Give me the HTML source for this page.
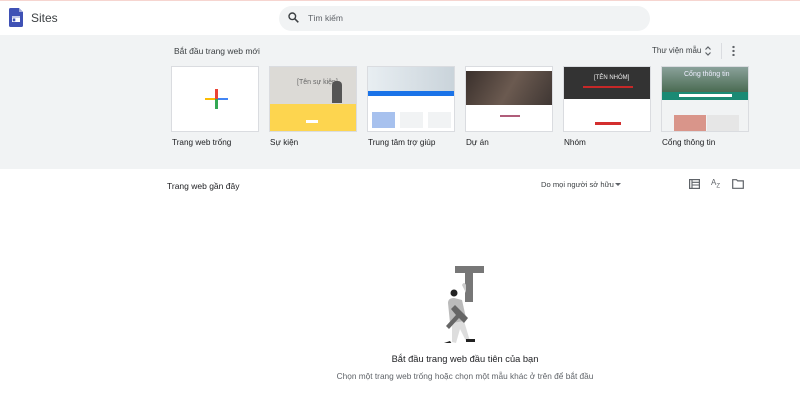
<!DOCTYPE html>
<html><head><meta charset="utf-8"><style>
*{margin:0;padding:0;box-sizing:border-box}
body{width:800px;height:419px;background:#fff;font-family:"Liberation Sans",Arial,sans-serif;position:relative;overflow:hidden;color:#202124}
.a{position:absolute}
.card{position:absolute;top:66px;width:88px;height:66px;background:#fff;border:1px solid #dadce0;overflow:hidden}
.lbl{position:absolute;top:138px;font-size:8.2px;color:#202124}
</style></head><body>
<div class="a" style="left:0;top:0;width:800px;height:1px;background:#f6d5d0"></div>
<svg class="a" style="left:9px;top:8px" width="14" height="19" viewBox="0 0 14 19"><path d="M0 1.5Q0 0 1.5 0H10L14 4V17.5Q14 19 12.5 19H1.5Q0 19 0 17.5Z" fill="#3f51b5"/><path d="M10 0L14 4H10Z" fill="#9fa8da"/><rect x="3" y="8" width="8" height="6" fill="#fff"/><rect x="3" y="8" width="8" height="2" fill="#c5cae9"/><rect x="3.8" y="10.5" width="2.5" height="2.8" fill="#3f51b5"/></svg>
<div class="a" style="left:31px;top:11px;font-size:12px;color:#3c4043">Sites</div>
<div class="a" style="left:279px;top:6px;width:371px;height:25px;border-radius:13px;background:#f1f3f4"></div>
<svg class="a" style="left:288px;top:12px" width="11" height="11" viewBox="0 0 11 11"><circle cx="4.3" cy="4.3" r="3.3" fill="none" stroke="#3c4043" stroke-width="1.4"/><path d="M6.8 6.8L10.3 10.3" stroke="#3c4043" stroke-width="1.5"/></svg>
<div class="a" style="left:308px;top:13px;font-size:8.5px;color:#5f6368">Tìm kiếm</div>
<div class="a" style="left:0;top:35px;width:800px;height:134px;background:#f1f3f4"></div>
<div class="a" style="left:174px;top:46px;font-size:8.5px;color:#3c4043">Bắt đầu trang web mới</div>
<div class="a" style="left:652px;top:46px;font-size:8px;color:#3c4043">Thư viện mẫu</div>
<svg class="a" style="left:704px;top:45px" width="8" height="12" viewBox="0 0 8 12"><path d="M1.5 4.5L4 2L6.5 4.5M1.5 7.5L4 10L6.5 7.5" fill="none" stroke="#5f6368" stroke-width="1.2"/></svg>
<div class="a" style="left:721px;top:43px;width:1px;height:16px;background:#dadce0"></div>
<div class="a" style="left:732px;top:45px;width:3px;height:11px;background:radial-gradient(circle,#5f6368 1.1px,transparent 1.3px) 0 0/3px 4px"></div>

<div class="card" style="left:171px">
<div class="a" style="left:43px;top:22px;width:2.5px;height:10px;background:#ea4335"></div>
<div class="a" style="left:43px;top:32px;width:2.5px;height:10px;background:#34a853"></div>
<div class="a" style="left:33px;top:30.5px;width:10px;height:2.5px;background:#fbbc04"></div>
<div class="a" style="left:45.5px;top:30.5px;width:10px;height:2.5px;background:#4285f4"></div>
</div>
<div class="card" style="left:269px;background:#dcdad6">
<div class="a" style="left:0;top:37px;width:88px;height:29px;background:#fdd54f"></div>
<div class="a" style="left:27px;top:12px;font-size:7px;color:#666">[Tên sự kiện]</div>
<div class="a" style="left:62px;top:14px;width:10px;height:22px;background:#555;border-radius:4px 4px 0 0"></div>
<div class="a" style="left:36px;top:53px;width:12px;height:3px;background:#fff"></div>
</div>
<div class="card" style="left:367px;background:#fff">
<div class="a" style="left:0;top:0;width:88px;height:24px;background:linear-gradient(90deg,#e8eef2,#c9d3da)"></div>
<div class="a" style="left:0;top:24px;width:88px;height:5px;background:#1a73e8"></div>
<div class="a" style="left:4px;top:45px;width:23px;height:16px;background:#a7c1ee"></div>
<div class="a" style="left:32px;top:45px;width:23px;height:16px;background:#f1f3f4"></div>
<div class="a" style="left:60px;top:45px;width:23px;height:16px;background:#f1f3f4"></div>
</div>
<div class="card" style="left:465px">
<div class="a" style="left:0;top:4px;width:88px;height:34px;background:linear-gradient(120deg,#3a302c,#6b5a50,#3d3532)"></div>
<div class="a" style="left:34px;top:48px;width:20px;height:2px;background:#b05d7a"></div>
</div>
<div class="card" style="left:563px">
<div class="a" style="left:0;top:0;width:88px;height:32px;background:#333"></div>
<div class="a" style="left:30px;top:8px;font-size:6px;color:#eee">[TÊN NHÓM]</div>
<div class="a" style="left:19px;top:19px;width:50px;height:1.5px;background:#c62828"></div>
<div class="a" style="left:31px;top:55px;width:26px;height:2.5px;background:#d32f2f"></div>
</div>
<div class="card" style="left:661px;background:#f1f3f4">
<div class="a" style="left:0;top:0;width:88px;height:25px;background:linear-gradient(180deg,#8aa19a,#4a6b52)"></div>
<div class="a" style="left:0;top:25px;width:88px;height:8px;background:#1b8a74"></div>
<div class="a" style="left:17px;top:27px;width:53px;height:3px;background:#fff"></div>
<div class="a" style="left:12px;top:48px;width:32px;height:18px;background:#d9958a"></div>
<div class="a" style="left:45px;top:48px;width:32px;height:18px;background:#e6e6e6"></div>
<div class="a" style="left:22px;top:4px;font-size:7px;color:#eef">Cổng thông tin</div>
</div>
<div class="lbl" style="left:172px">Trang web trống</div>
<div class="lbl" style="left:270px">Sự kiện</div>
<div class="lbl" style="left:368px">Trung tâm trợ giúp</div>
<div class="lbl" style="left:466px">Dự án</div>
<div class="lbl" style="left:564px">Nhóm</div>
<div class="lbl" style="left:662px">Cổng thông tin</div>

<div class="a" style="left:167px;top:181px;font-size:8.5px;color:#202124">Trang web gần đây</div>
<div class="a" style="left:541px;top:180px;font-size:7.6px;color:#3c4043">Do mọi người sở hữu</div>
<svg class="a" style="left:615px;top:183px" width="6" height="4"><path d="M0 0H6L3 3Z" fill="#5f6368"/></svg>
<svg class="a" style="left:689px;top:179px" width="11" height="10" viewBox="0 0 11 10"><rect x=".6" y=".6" width="9.8" height="8.8" fill="none" stroke="#5f6368" stroke-width="1.2"/><path d="M3 .6V9.4M3 3.3H10.4M3 6H10.4" stroke="#5f6368" stroke-width="1.1"/></svg>
<div class="a" style="left:711px;top:178px;font-size:8px;color:#5f6368">A<sub style="font-size:6px">Z</sub></div>
<svg class="a" style="left:732px;top:179px" width="12" height="10" viewBox="0 0 12 10"><path d="M.7 .7H4.5L5.7 1.9H11.3V9.3H.7Z" fill="none" stroke="#5f6368" stroke-width="1.2"/></svg>

<svg class="a" style="left:440px;top:263px" width="45" height="80" viewBox="0 0 45 80">
<rect x="15" y="3" width="29" height="7" fill="#777"/><rect x="25" y="3" width="8" height="36" fill="#777"/>
<path d="M22 22Q24 18 26 22L26 30Z" fill="#ccc"/>
<circle cx="14" cy="30" r="3.5" fill="#222"/>
<path d="M8 40Q8 35 14 35L22 37L26 55L22 62L10 60Z" fill="#bbb"/>
<path d="M12 60L24 58L30 78L26 78L20 66L16 80L12 79Z" fill="#ddd"/>
<path d="M15 42L28 55L24 60L19 55L9 66L6 63L16 52L11 46Z" fill="#666"/>
<path d="M4 80L10 78L14 84Z" fill="#222"/><rect x="26" y="76" width="9" height="3" fill="#222"/>
</svg>
<div class="a" style="left:365px;width:200px;text-align:center;top:354px;font-size:9.3px;color:#202124">Bắt đầu trang web đầu tiên của bạn</div>
<div class="a" style="left:265px;width:400px;text-align:center;top:371px;font-size:8.3px;color:#5f6368">Chọn một trang web trống hoặc chọn một mẫu khác ở trên để bắt đầu</div>
</body></html>
